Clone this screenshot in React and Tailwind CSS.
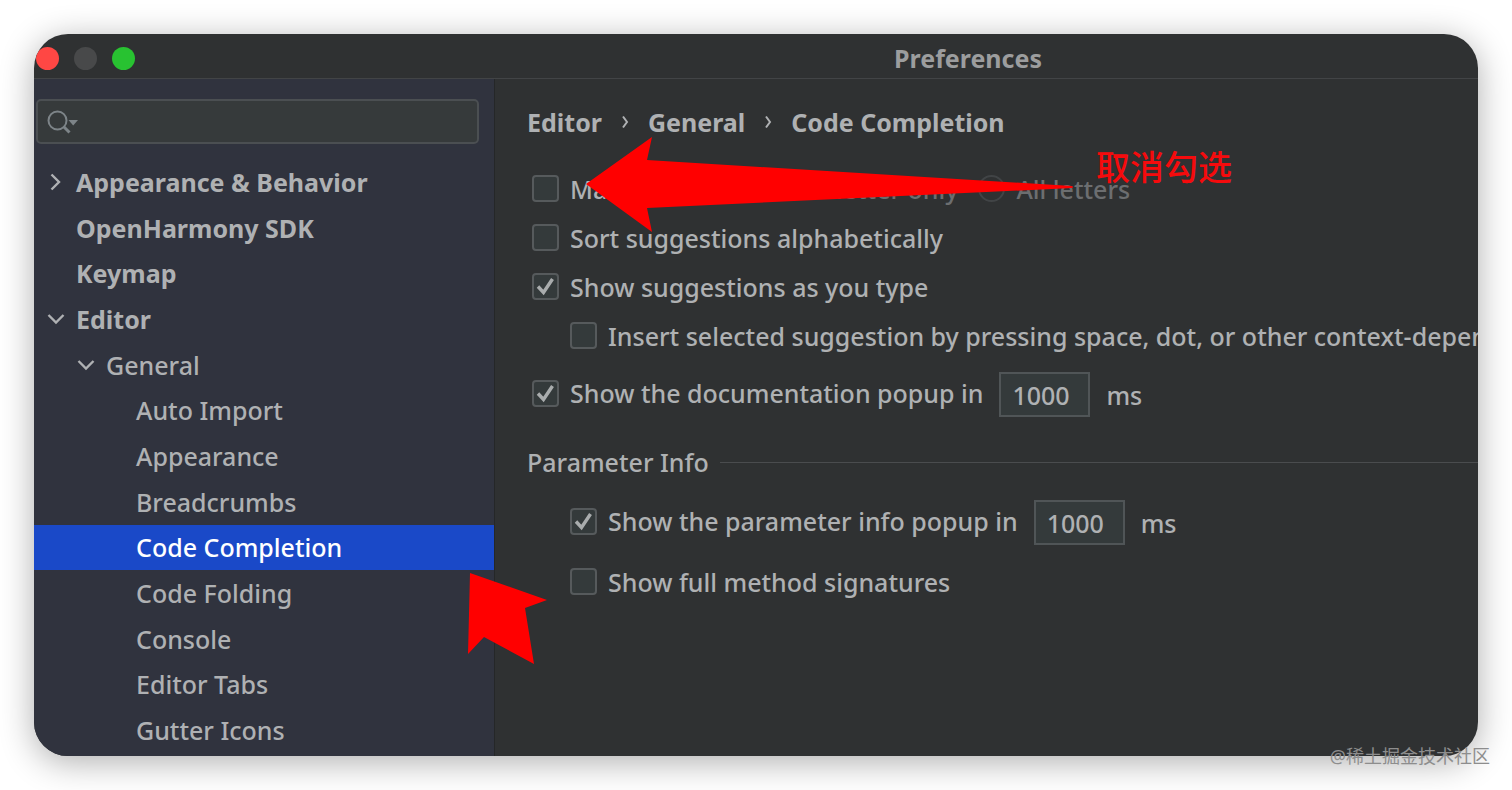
import { useState } from 'react'

const tree = [
  { label: 'Appearance & Behavior', level: 0, state: 'closed' },
  { label: 'OpenHarmony SDK', level: 0 },
  { label: 'Keymap', level: 0 },
  { label: 'Editor', level: 0, state: 'open' },
  { label: 'General', level: 1, state: 'open' },
  { label: 'Auto Import', level: 2 },
  { label: 'Appearance', level: 2 },
  { label: 'Breadcrumbs', level: 2 },
  { label: 'Code Completion', level: 2 },
  { label: 'Code Folding', level: 2 },
  { label: 'Console', level: 2 },
  { label: 'Editor Tabs', level: 2 },
  { label: 'Gutter Icons', level: 2 },
]

const levelClass = [
  'pl-[10px] font-bold',
  'pl-[40px]',
  'pl-[70px]',
]

export default function App() {
  const [selected, setSelected] = useState('Code Completion')

  return (
    <div className="relative min-h-screen bg-white p-[34px] font-['Noto_Sans','Noto_Sans_CJK_SC',sans-serif] text-[25px] leading-9 font-medium text-[#afb1b3]">
      <div className="relative flex min-h-[calc(100vh-68px)] flex-col overflow-hidden rounded-[34px] bg-[#2f3132] shadow-[0_6px_34px_rgba(0,0,0,0.32)]">
        <TitleBar />
        <div className="flex flex-1">
          <aside className="flex w-[461px] shrink-0 flex-col border-r border-[#252728] bg-[#30333e] pt-5 pb-[3px]">
            <SearchBox />
            <ul className="mt-[15px] grid flex-1 auto-rows-fr">
              {tree.map(item => (
                <TreeRow
                  key={item.label}
                  {...item}
                  active={item.label === selected}
                  onSelect={() => setSelected(item.label)}
                />
              ))}
            </ul>
          </aside>
          <Settings />
        </div>
        <Annotations />
      </div>
      <div className="absolute right-[22px] bottom-[20px] text-lg leading-7 font-normal text-[#8d8d8d]">@稀土掘金技术社区</div>
    </div>
  )
}

function TitleBar() {
  return (
    <header className="flex h-[45px] items-center border-b border-[#424446] pt-1 pl-[2px]">
      <div className="flex gap-[15px]">
        <button aria-label="Close" className="size-[23px] rounded-full bg-[#ff4744]" />
        <button aria-label="Minimize" className="size-[23px] rounded-full bg-[#48494a]" />
        <button aria-label="Zoom" className="size-[23px] rounded-full bg-[#28c231]" />
      </div>
      <h1 className="flex-1 pl-[323px] text-center font-bold text-[#9c9d9e]">Preferences</h1>
    </header>
  )
}

function SearchBox() {
  return (
    <label className="mr-[15px] ml-[2px] flex h-[45px] items-center rounded-[5px] border-2 border-[#4b4f52] bg-[#363a3b] pl-[9px]">
      <svg width="32" height="26" viewBox="0 0 32 26" fill="none" aria-hidden="true">
        <circle cx="10.5" cy="11.5" r="9" stroke="#7d8488" strokeWidth="2" />
        <path d="M16.5 17.5 L22.5 23.5" stroke="#7d8488" strokeWidth="3" />
        <path d="M21.5 11 H31 L26.2 16.5 Z" fill="#7d8488" />
      </svg>
      <input type="text" aria-label="Search settings" className="min-w-0 flex-1 bg-transparent px-2 outline-none" />
    </label>
  )
}

function TreeRow({ label, level, state, active, onSelect }) {
  return (
    <li className="flex">
      <button
        onClick={onSelect}
        className={`flex w-full items-center text-left ${levelClass[level]} ${active ? 'bg-[#1a49c8] text-white' : ''}`}
      >
        <span className="flex w-8 shrink-0">{state && <Chevron open={state === 'open'} />}</span>
        {label}
      </button>
    </li>
  )
}

function Chevron({ open }) {
  return (
    <svg width="24" height="24" viewBox="0 0 24 24" fill="none" stroke="#afb1b3" strokeWidth="2.4" aria-hidden="true">
      {open ? <path d="M4.5 8 L12 15.5 L19.5 8" /> : <path d="M7.5 4.5 L15 12 L7.5 19.5" />}
    </svg>
  )
}

function Settings() {
  return (
    <main className="min-w-0 flex-1 pt-[25px] pl-8">
      <nav className="flex items-center font-bold">
        <a href="#editor">Editor</a>
        <Separator />
        <a href="#general">General</a>
        <Separator />
        <a href="#code-completion">Code Completion</a>
      </nav>

      <div className="mt-6 pl-[5px] whitespace-nowrap">
        <div className="flex h-[49px] items-center">
          <CheckBox label="Match case:" />
          <Radio label="First letter only" className="ml-7" />
          <Radio label="All letters" className="ml-5" />
        </div>
        <div className="flex h-[49px] items-center">
          <CheckBox label="Sort suggestions alphabetically" />
        </div>
        <div className="flex h-[49px] items-center">
          <CheckBox label="Show suggestions as you type" checked />
        </div>
        <div className="flex h-[49px] items-center pl-[38px]">
          <CheckBox label="Insert selected suggestion by pressing space, dot, or other context-dependent keys" />
        </div>
        <div className="mt-3 flex h-[45px] items-start">
          <CheckBox label="Show the documentation popup in" checked />
          <Delay label="Documentation popup delay" />
        </div>
      </div>

      <section className="whitespace-nowrap">
        <div className="mt-[27px] flex items-center gap-[11px]">
          <h2>Parameter Info</h2>
          <div className="h-px flex-1 bg-[#4a4c4e]" />
        </div>
        <div className="mt-5 flex h-[45px] items-start pl-[43px]">
          <CheckBox label="Show the parameter info popup in" checked />
          <Delay label="Parameter info popup delay" />
        </div>
        <div className="mt-3 flex h-[49px] items-center pl-[43px]">
          <CheckBox label="Show full method signatures" />
        </div>
      </section>
    </main>
  )
}

function Separator() {
  return (
    <svg className="mx-[18px]" width="10" height="14" viewBox="0 0 10 14" fill="none" stroke="#afb1b3" strokeWidth="2" aria-hidden="true">
      <path d="M3 1.5 L7 7 L3 12.5" />
    </svg>
  )
}

function CheckBox({ label, checked = false }) {
  return (
    <label className="flex h-[42px] items-center gap-[11px]">
      <span className="grid shrink-0">
        <input
          type="checkbox"
          defaultChecked={checked}
          className="peer col-start-1 row-start-1 size-[27px] appearance-none rounded-[4px] border-2 border-[#565a5c] bg-[#343a3b]"
        />
        <svg
          className="pointer-events-none invisible col-start-1 row-start-1 peer-checked:visible"
          width="27"
          height="27"
          viewBox="0 0 27 27"
          fill="none"
          stroke="#a9acad"
          strokeWidth="3.4"
          aria-hidden="true"
        >
          <path d="M6 13.5 L11.5 19.5 L20.5 6" />
        </svg>
      </span>
      {label}
    </label>
  )
}

function Radio({ label, className }) {
  return (
    <label className={`flex items-center gap-[11px] text-[#6c6e70] ${className}`}>
      <input
        type="radio"
        name="match-case"
        disabled
        className="size-[27px] shrink-0 appearance-none rounded-full border-2 border-[#414446]"
      />
      {label}
    </label>
  )
}

function Delay({ label }) {
  return (
    <label className="ml-4 flex items-center gap-4">
      <input
        type="text"
        aria-label={label}
        defaultValue="1000"
        className="h-[45px] w-[91px] border-2 border-[#505557] bg-[#343a3b] pl-[11px] outline-none"
      />
      ms
    </label>
  )
}

// Red markup drawn over the window
function Annotations() {
  return (
    <>
      <svg className="pointer-events-none absolute top-[103px] left-[552px]" width="488" height="95" viewBox="0 0 488 95" fill="#ff0000" aria-hidden="true">
        <path d="M0 47 L66 0 L61 23 L486 49 Q488 50 486 51 L61 71 L66 95 Z" />
      </svg>
      <div className="absolute top-[108px] left-[1062px] text-[34px] leading-[50px] text-[#f50b0d]">取消勾选</div>
      <svg className="pointer-events-none absolute top-[539px] left-[434px]" width="79" height="91" viewBox="0 0 79 91" fill="#ff0000" aria-hidden="true">
        <path d="M2 0 L79 27 L57 35 L66 91 L16 64 L0 81 Z" />
      </svg>
    </>
  )
}
